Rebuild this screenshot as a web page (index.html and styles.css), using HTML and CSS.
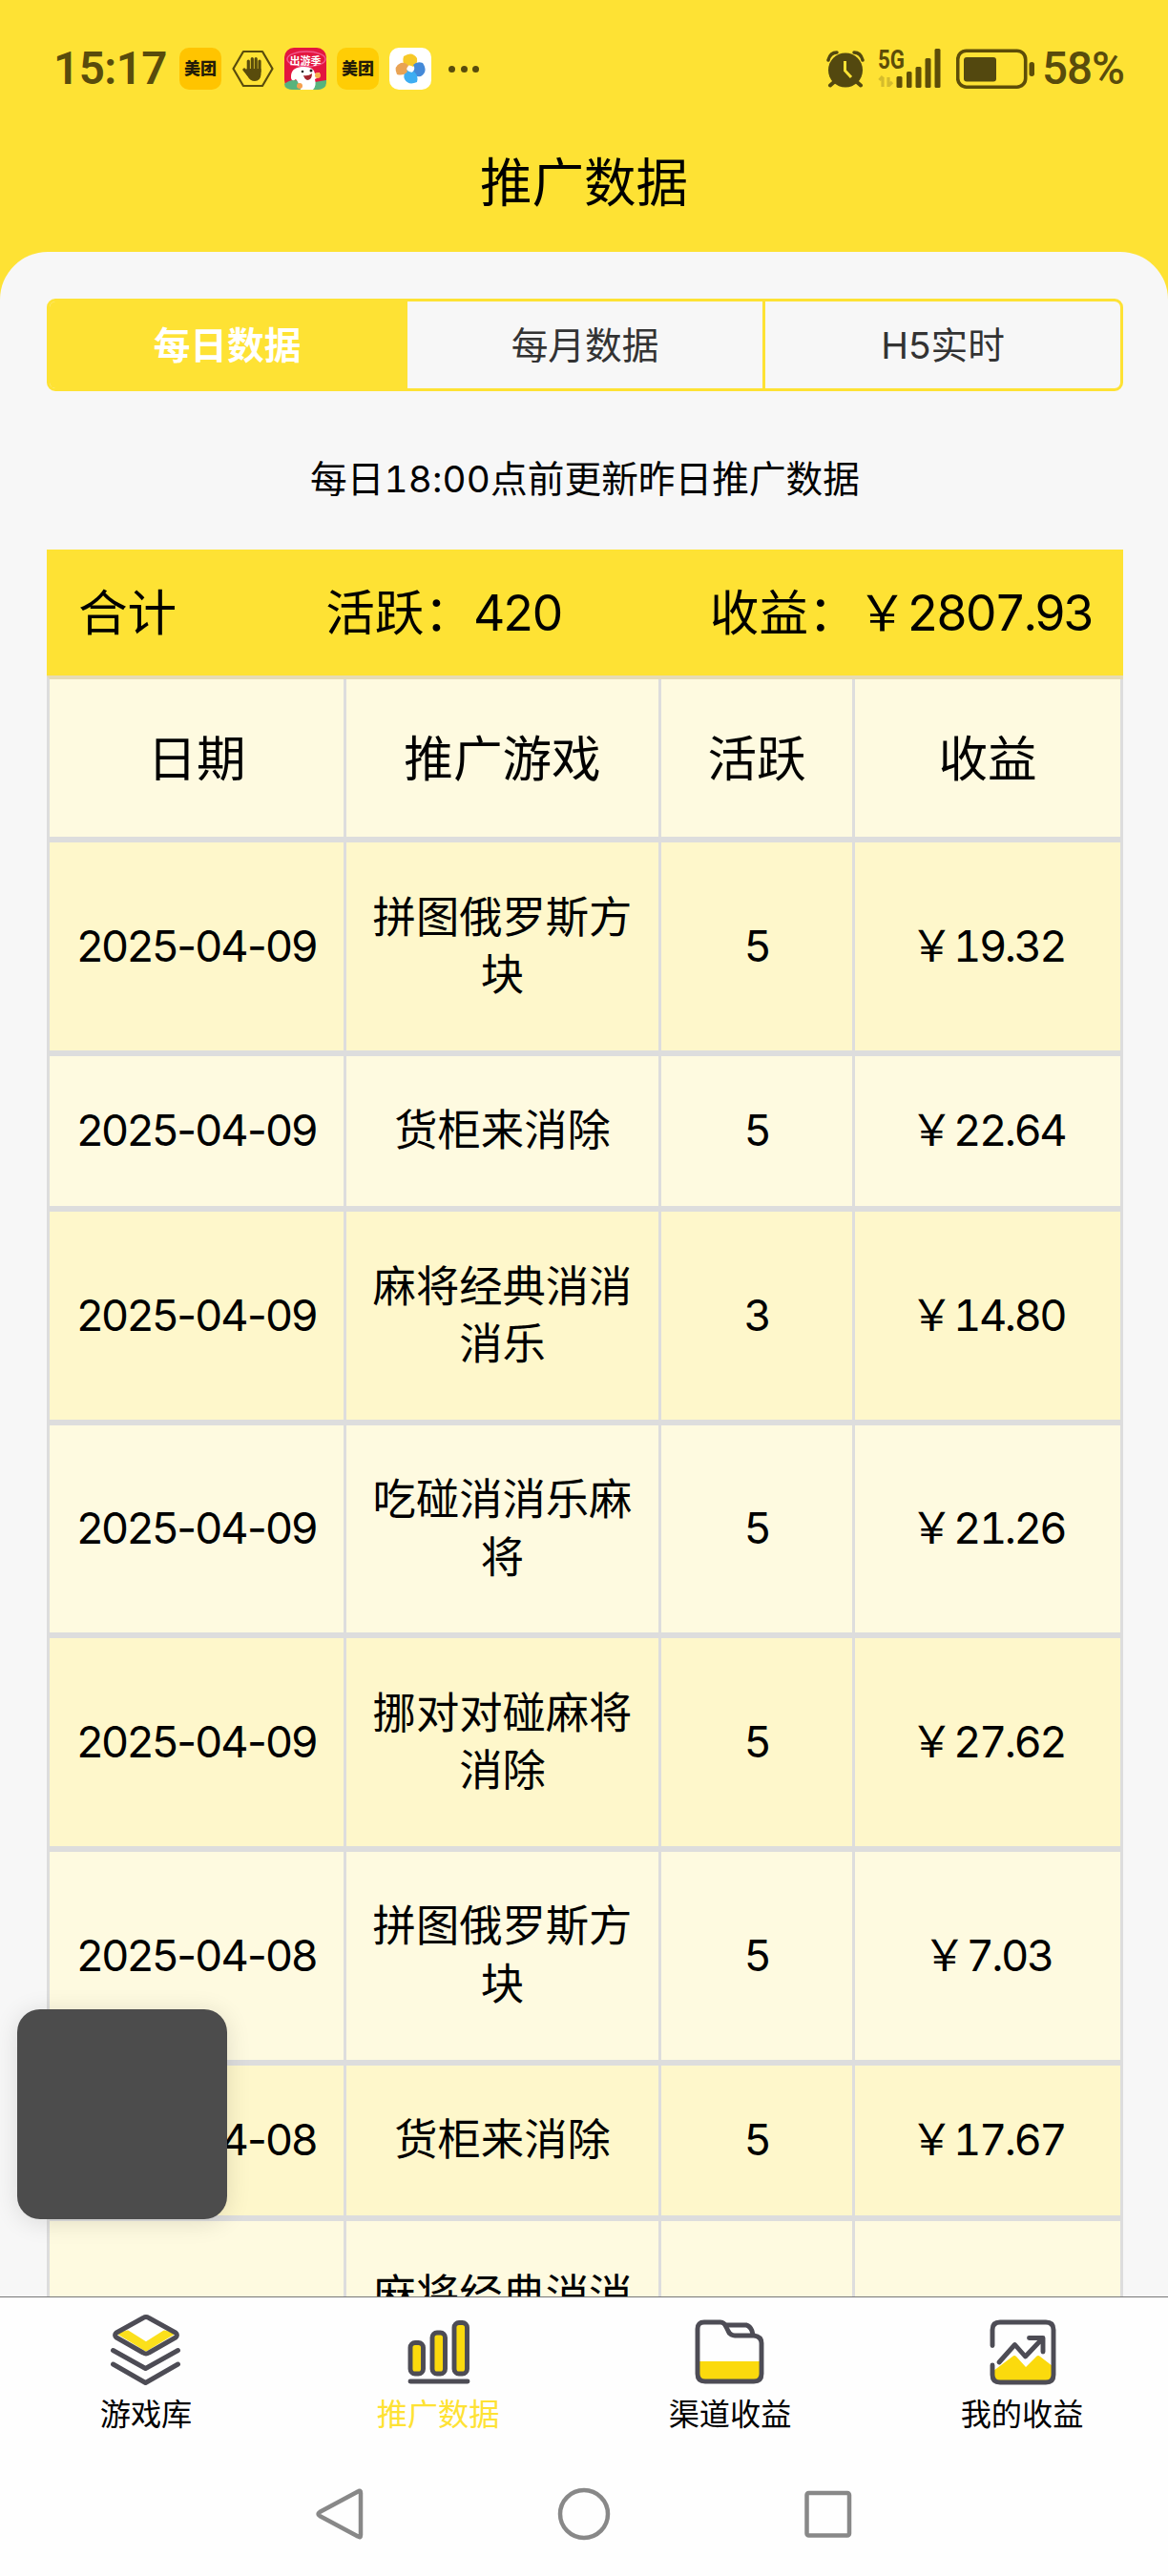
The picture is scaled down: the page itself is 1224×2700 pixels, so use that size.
FILE: index.html
```html
<!DOCTYPE html>
<html lang="zh-CN">
<head>
    <meta charset="UTF-8">
    <meta name="viewport" content="width=device-width, initial-scale=1.0">
    <title>推广数据</title>
    <link rel="stylesheet" href="styles.css">
</head>
<body>
    <div class="status-bar">
        <span class="time">15:17</span>
        <div class="app-icons">
            <span class="app-icon meituan">美团</span>
            <svg class="app-icon" viewBox="0 0 44 44">
                <path d="M12 4H32L42.500 22L32 40H12L1.500 22Z" fill="none" stroke="#594c0c" stroke-width="2.200" stroke-linejoin="round"/>
                <g stroke="#594c0c" stroke-width="3.200" stroke-linecap="round">
                    <path d="M17.300 14V25M21.300 11.500V25M25.200 11.500V25M29 14V25M13 23L17 28"/>
                </g>
                <path d="M16 22H30.500V28Q30 35 24 35Q19 35 16.500 30L13 24Z" fill="#594c0c"/>
            </svg>
            <svg class="app-icon" viewBox="0 0 44 44">
                <rect width="44" height="44" rx="10" fill="#e3163f"/>
                <path d="M0 38Q10 30 20 38L44 34V36Q44 44 34 44H10Q0 44 0 38Z" fill="#57b37d"/>
                <ellipse cx="23" cy="12" rx="20" ry="8" fill="none" stroke="#f2558a" stroke-width="1.500"/>
                <text x="22" y="18" class="jd-text">出游季</text>
                <path d="M7 32Q6 21 18 20Q31 19 32 27L37 26L36 31L32 33Q34 40 30 44H17Q15 36 12 33Q8 36 7 32Z" fill="#fff"/>
                <circle cx="19" cy="25" r="1.300" fill="#222"/>
                <circle cx="28" cy="24" r="1.500" fill="#222"/>
                <path d="M20 29Q25 30 29 27Q29 34 24 34Q21 33 20 29Z" fill="#a3242f"/>
                <circle cx="35" cy="29" r="3" fill="#f6b04d"/>
                <circle cx="16" cy="40" r="3" fill="#f6a04d"/>
            </svg>
            <span class="app-icon meituan light">美团</span>
            <svg class="app-icon" viewBox="0 0 44 44">
                <rect width="44" height="44" rx="10" fill="#fff"/>
                <path d="M15 9Q24 3 29 11Q30 17 25 20Q21 17 17 20Q13 15 15 9Z" fill="#f7c928"/>
                <path d="M35 16Q41 25 33 30Q27 31 24 26Q28 22 25 18Q29 14 35 16Z" fill="#4489d8"/>
                <path d="M29 36Q20 40 16 33Q14 28 18 23Q22 27 26 25Q31 30 29 36Z" fill="#3dadf2"/>
                <path d="M8 28Q4 19 12 16Q17 15 20 19Q17 22 19 25Q15 30 8 28Z" fill="#e9a354"/>
            </svg>
        </div>
        <div class="dots"><i></i><i></i><i></i></div>
        <svg class="alarm" viewBox="0 0 40 40">
            <path d="M2 11Q4 3 11 3M29 3Q36 3 38 11" fill="none" stroke="#53480f" stroke-width="3.500" stroke-linecap="round"/>
            <circle cx="20" cy="21.500" r="18" fill="#53480f"/>
            <path d="M8 34L4 37.500M32 34L36 37.500" stroke="#53480f" stroke-width="4" stroke-linecap="round"/>
            <path d="M19.500 12V22L26 29" fill="none" stroke="#fee234" stroke-width="3"/>
        </svg>
        <svg class="signal" viewBox="0 0 68 44">
            <text x="0" y="22" class="net-text" textLength="28" lengthAdjust="spacingAndGlyphs">5G</text>
            <path d="M5 31V41M5 30L1.500 34M11 31V41M11 40L15 36" fill="none" stroke="#d5bc2c" stroke-width="3.200"/>
            <g fill="#5d4d08">
                <rect x="19.500" y="30" width="6" height="12" rx="1.500"/>
                <rect x="30" y="25" width="5.500" height="17" rx="1.500"/>
                <rect x="39.500" y="20" width="6" height="22" rx="1.500"/>
                <rect x="49.500" y="11" width="6" height="31" rx="1.500"/>
                <rect x="59.500" y="1" width="6" height="41" rx="1.500"/>
            </g>
        </svg>
        <svg class="battery" viewBox="0 0 84 42">
            <rect x="1.700" y="2.200" width="71" height="38" rx="9" fill="none" stroke="#5d4d08" stroke-width="3.600"/>
            <rect x="8" y="9" width="34" height="25.500" rx="3" fill="#53480f"/>
            <rect x="76.500" y="14" width="5.500" height="15" rx="2.700" fill="#5d4d08"/>
        </svg>
        <span class="percent">58%</span>
    </div>

    <header class="page-header">
        <h1>推广数据</h1>
    </header>

    <main class="panel">
        <div class="tabs">
            <a class="tab active">每日数据</a>
            <a class="tab">每月数据</a>
            <a class="tab">H5实时</a>
        </div>

        <p class="notice">每日<span class="num">18:00</span>点前更新昨日推广数据</p>

        <div class="summary">
            <span>合计</span>
            <span>活跃：<span class="num">420</span></span>
            <span>收益：￥<span class="num">2807.93</span></span>
        </div>

        <div class="data-table">
            <div class="row head">
                <div class="cell">日期</div>
                <div class="cell">推广游戏</div>
                <div class="cell">活跃</div>
                <div class="cell">收益</div>
            </div>
            <div class="row">
                <div class="cell"><span class="date">2025-04-09</span></div>
                <div class="cell">拼图俄罗斯方块</div>
                <div class="cell"><span class="num">5</span></div>
                <div class="cell">￥<span class="num">19.32</span></div>
            </div>
            <div class="row">
                <div class="cell"><span class="date">2025-04-09</span></div>
                <div class="cell">货柜来消除</div>
                <div class="cell"><span class="num">5</span></div>
                <div class="cell">￥<span class="num">22.64</span></div>
            </div>
            <div class="row">
                <div class="cell"><span class="date">2025-04-09</span></div>
                <div class="cell">麻将经典消消消乐</div>
                <div class="cell"><span class="num">3</span></div>
                <div class="cell">￥<span class="num">14.80</span></div>
            </div>
            <div class="row">
                <div class="cell"><span class="date">2025-04-09</span></div>
                <div class="cell">吃碰消消乐麻将</div>
                <div class="cell"><span class="num">5</span></div>
                <div class="cell">￥<span class="num">21.26</span></div>
            </div>
            <div class="row">
                <div class="cell"><span class="date">2025-04-09</span></div>
                <div class="cell">挪对对碰麻将消除</div>
                <div class="cell"><span class="num">5</span></div>
                <div class="cell">￥<span class="num">27.62</span></div>
            </div>
            <div class="row">
                <div class="cell"><span class="date">2025-04-08</span></div>
                <div class="cell">拼图俄罗斯方块</div>
                <div class="cell"><span class="num">5</span></div>
                <div class="cell">￥<span class="num">7.03</span></div>
            </div>
            <div class="row">
                <div class="cell"><span class="date">2025-04-08</span></div>
                <div class="cell">货柜来消除</div>
                <div class="cell"><span class="num">5</span></div>
                <div class="cell">￥<span class="num">17.67</span></div>
            </div>
            <div class="row">
                <div class="cell"></div>
                <div class="cell">麻将经典消消消乐</div>
                <div class="cell"></div>
                <div class="cell"></div>
            </div>
        </div>
    </main>

    <nav class="tab-bar">
        <a class="nav-item">
            <svg viewBox="0 0 78 78">
                <path d="M11 22L39 39L67 22L58 20L39 32L20 20Z" fill="#fbe01c" stroke="#fbe01c" stroke-width="3"/>
                <path d="M36 5.500Q39 3.500 42 5.500L70 21Q73 23.500 70 26L42 42Q39 44 36 42L8 26Q5 23.500 8 21Z"/>
                <path d="M4.500 39.500L38.500 58.500L72.500 39.500M4.500 54L38.500 73.500L72.500 54"/>
            </svg>
            <span>游戏库</span>
        </a>
        <a class="nav-item active">
            <svg viewBox="0 0 78 78">
                <g fill="#fbda0d">
                    <rect x="10" y="31.500" width="13.500" height="32.500" rx="5"/>
                    <rect x="33" y="21" width="13.500" height="43" rx="5"/>
                    <rect x="56" y="10.500" width="13.500" height="53.500" rx="5"/>
                </g>
                <path d="M10 72H70"/>
            </svg>
            <span>推广数据</span>
        </a>
        <a class="nav-item">
            <svg viewBox="0 0 78 78">
                <path d="M5 51H72V65Q72 71 65 71H12Q5 71 5 65Z" fill="#fbda0d" stroke="none"/>
                <path d="M12 10H29Q33 10 35 15L37 19Q39 24 44 24H64Q72 25 72 32V64Q72 72 64 72H13Q5 72 5 64V17Q5 10 12 10Z"/>
                <path d="M34 13H56Q60 14 62 19L63 23"/>
            </svg>
            <span>渠道收益</span>
        </a>
        <a class="nav-item">
            <svg viewBox="0 0 78 78">
                <path d="M9 61L29 46Q31 44 33 46L43 57L54 46Q56 44 58 46L71 56V65Q71 72 65 72H15Q9 72 9 65Z" fill="#fbda0d" stroke="none"/>
                <path d="M8 34.500V18Q8 10 16 10H64Q72 10 72 18V65Q72 73 64 73H16Q8 73 8 65V55"/>
                <path d="M15 52L31.500 33.500L42.500 46L60.500 27M46.500 26.500H61V41"/>
            </svg>
            <span>我的收益</span>
        </a>
    </nav>

    <div class="system-bar">
        <svg viewBox="0 0 60 60"><path d="M49 6.500Q52 4.500 52 8V52Q52 55.500 49 53.500L9 32Q6 30 9 28Z"/></svg>
        <svg viewBox="0 0 60 60"><circle cx="30" cy="30" r="25"/></svg>
        <svg viewBox="0 0 60 60"><rect x="7.500" y="8" width="44.500" height="44.500" rx="2"/></svg>
    </div>

    <div class="float-box"></div>
</body>
</html>
```
FILE: styles.css
```css
* {
    box-sizing: border-box;
}
body {
    margin: 0;
    width: 1224px;
    height: 2700px;
    display: flex;
    flex-direction: column;
    overflow: hidden;
    position: relative;
    background-color: #fee234;
    color: #000;
    font-family: Inter, "Noto Sans CJK SC", sans-serif;
}
h1, p {
    margin: 0;
    font-weight: 400;
}

/* status bar */
.status-bar {
    height: 144px;
    padding-left: 56px;
    padding-right: 46px;
    display: flex;
    align-items: center;
    flex-shrink: 0;
    color: #594c0c;
}
.time, .percent {
    font-family: Roboto, sans-serif;
    font-size: 47.5px;
    font-weight: 600;
    line-height: 48px;
}
.time {
    width: 132px;
    letter-spacing: -0.5px;
}
.percent {
    font-weight: 500;
    letter-spacing: -1px;
    width: 86px;
}
.app-icons {
    display: flex;
    gap: 11px;
}
.app-icon {
    width: 44px;
    height: 44px;
    display: block;
}
.meituan {
    border-radius: 10px;
    background-color: #ffc400;
    color: #241c08;
    font-size: 17px;
    font-weight: 900;
    line-height: 44px;
    text-align: center;
}
.meituan.light {
    background-color: #ffcd05;
}
.jd-text {
    font-size: 11px;
    font-weight: 700;
    fill: #fff;
    text-anchor: middle;
}
.dots {
    display: flex;
    gap: 5.5px;
    margin-left: 18px;
}
.dots i {
    width: 7px;
    height: 7px;
    border-radius: 50%;
    background-color: #594c0c;
}
.alarm {
    width: 40px;
    height: 40px;
    margin-left: auto;
    margin-right: 14px;
}
.signal {
    width: 68px;
    height: 44px;
    margin-right: 14px;
    overflow: visible;
}
.net-text {
    font-family: Roboto, sans-serif;
    font-size: 28px;
    font-weight: 700;
    fill: #5d4d08;
}
.battery {
    width: 84px;
    height: 42px;
    margin-right: 6px;
}

/* title */
.page-header {
    height: 120px;
    flex-shrink: 0;
    text-align: center;
}
.page-header h1 {
    font-size: 54.5px;
    line-height: 94px;
}

/* content */
.panel {
    flex: 1;
    min-height: 0;
    overflow: hidden;
    padding: 49px 47px 0 49px;
    border-radius: 50px 50px 0 0;
    background-color: #f7f7f7;
}
.tabs {
    display: flex;
    height: 97px;
    border: 3px solid #fee234;
    border-radius: 9px;
    overflow: hidden;
}
.tab {
    flex: 1;
    font-size: 38.7px;
    line-height: 93px;
    text-align: center;
    color: #333;
}
.tab + .tab {
    border-left: 3px solid #fee234;
}
.tab.active {
    background-color: #fee234;
    color: #fff;
    font-weight: 700;
}
.notice {
    margin-top: 62px;
    height: 60px;
    font-size: 38.7px;
    line-height: 60px;
    text-align: center;
}
.num {
    letter-spacing: -0.055em;
    font-feature-settings: "tnum";
}
.date {
    letter-spacing: -0.036em;
}
.notice .num {
    letter-spacing: 0.005em;
}
.summary {
    margin-top: 44px;
    height: 132px;
    padding: 0 32px 0 33px;
    display: flex;
    justify-content: space-between;
    font-size: 51.6px;
    line-height: 132px;
    background-color: #fee234;
}
.data-table {
    border-left: 3px solid #ddd;
    border-top: 4px solid #e6dbb4;
    font-size: 45.3px;
    line-height: 60.3px;
}
.row {
    display: grid;
    grid-template-columns: 311px 330px 203px 281px;
    border-bottom: 6px solid #ddd;
    background-color: #fefae0;
}
.row:nth-child(even) {
    background-color: #fef7cb;
}
.cell {
    display: flex;
    align-items: center;
    justify-content: center;
    padding: 48.5px 24px;
    border-right: 3px solid #ddd;
    text-align: center;
}
.cell:first-child {
    padding-left: 10px;
    padding-right: 10px;
}
.head .cell {
    padding-top: 52.5px;
    padding-bottom: 52.5px;
    font-size: 51.6px;
}

/* bottom navigation */
.tab-bar {
    display: flex;
    height: 157px;
    flex-shrink: 0;
    border-top: 1px solid #777;
    background-color: #fefefe;
}
.nav-item {
    flex: 1;
    display: flex;
    flex-direction: column;
    align-items: center;
    padding-top: 16px;
    font-size: 32.2px;
    line-height: 58px;
}
.nav-item svg {
    width: 78px;
    height: 78px;
    fill: none;
    stroke: #4d4c55;
    stroke-width: 4.9;
    stroke-linecap: round;
    stroke-linejoin: round;
}
.nav-item.active {
    color: #fee234;
}
.system-bar {
    display: flex;
    justify-content: center;
    gap: 196px;
    height: 136px;
    padding-top: 41px;
    flex-shrink: 0;
    background-color: #fefefe;
}
.system-bar svg {
    width: 60px;
    height: 60px;
    fill: none;
    stroke: #888;
    stroke-width: 4.5;
}

/* floating block above the list */
.float-box {
    position: absolute;
    left: 18px;
    top: 2106px;
    width: 220px;
    height: 220px;
    border-radius: 24px;
    background-color: #4c4c4c;
    box-shadow: 0 3px 26px rgba(0, 0, 0, 0.12);
}
```
